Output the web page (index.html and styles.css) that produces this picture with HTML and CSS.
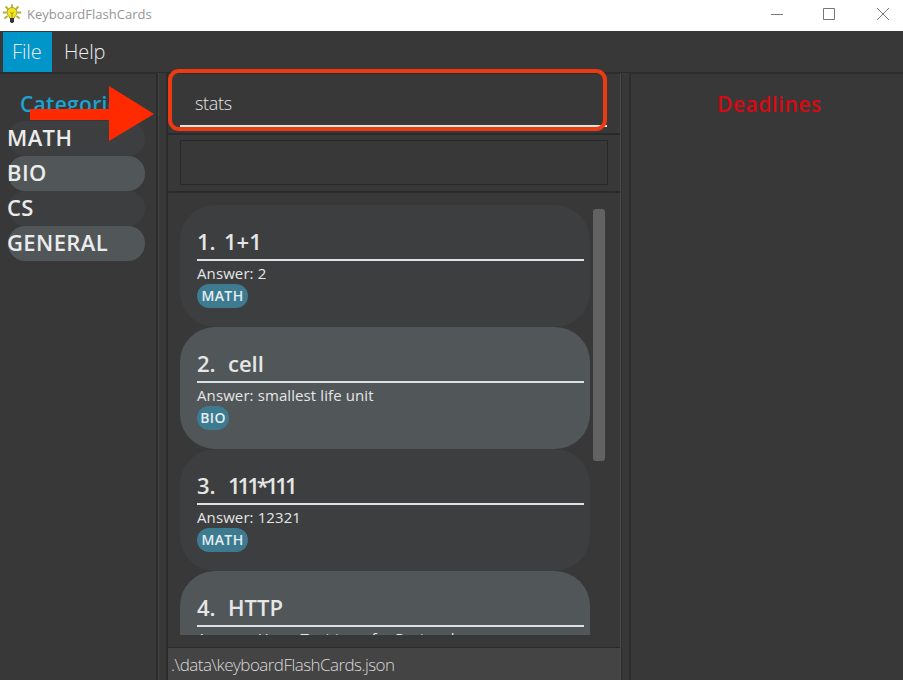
FILE: index.html
```html
<!DOCTYPE html>
<html lang="en">
<head>
<meta charset="utf-8">
<title>KeyboardFlashCards</title>
<link rel="stylesheet" href="styles.css">
</head>
<body>
<div class="window">
  <header class="titlebar">
    <svg class="logo" width="20" height="20" viewBox="0 0 20 20">
      <g stroke="#b5ae35" stroke-width="1.8" stroke-linecap="round"><path d="M10 1v2M4 3l2 2M16 3l-2 2M1.500 8.500h2.500M18.500 8.500h-2.500M3 14l2-1.500M17 14l-2-1.500"/></g>
      <path d="M10 3.500a5 5 0 0 0-5 5c0 3 2.500 3.500 3 6h4c.5-2.500 3-3 3-6a5 5 0 0 0-5-5z" fill="#f3e51b" stroke="#938d22" stroke-width=".8"/>
      <path d="M8.500 8l1.500 2 1.500-2M10 10v4" fill="none" stroke="#8d8417" stroke-width=".8"/>
      <path d="M8 14h4v3.500l-1 1.500H9L8 17.500z" fill="#34363c"/>
    </svg>
    <span class="app-name">KeyboardFlashCards</span>
    <svg class="controls" width="120" height="14" viewBox="0 0 120 14" fill="none" stroke="#777">
      <path d="M1 7.500h12M53.500 1.500h11v11h-11zM107 1l12 12M119 1l-12 12"/>
    </svg>
  </header>
  <nav class="menu"><span class="menu-item active">File</span><span class="menu-item">Help</span></nav>
  <main class="panes">
    <aside class="pane categories">
      <h2 class="cat-title">Categories</h2>
      <ul class="cat-list"><li>MATH</li><li>BIO</li><li>CS</li><li>GENERAL</li></ul>
    </aside>
    <section class="center">
      <div class="command"><div class="command-input">stats</div></div>
      <div class="result"><div class="result-box"></div></div>
      <div class="list-wrap">
        <div class="cards">
          <article class="card"><h3><span class="num first">1.</span><span>1+1</span></h3><p>Answer: 2</p><span class="tag">MATH</span></article>
          <article class="card"><h3><span class="num">2.</span><span>cell</span></h3><p>Answer: smallest life unit</p><span class="tag bio">BIO</span></article>
          <article class="card"><h3><span class="num">3.</span><span class="ones">111*111</span></h3><p>Answer: 12321</p><span class="tag">MATH</span></article>
          <article class="card"><h3><span class="num">4.</span><span>HTTP</span></h3><p>Answer: HyperText transfer Protocol</p></article>
        </div>
        <div class="scrollbar"></div>
      </div>
      <footer class="status">.\data\keyboardFlashCards.json</footer>
    </section>
    <aside class="pane deadlines"><h2 class="dead-title">Deadlines</h2></aside>
  </main>
  <div class="highlight"></div>
  <svg class="arrow" width="124" height="56" viewBox="0 0 124 56"><path d="M0 23h79V0l45 28-45 27V34H0z" fill="#ff2a00"/></svg>
</div>
</body>
</html>
```
FILE: styles.css
```css
* { box-sizing: border-box; }
body { margin: 0; font-family: "Open Sans", "Noto Sans", sans-serif; overflow: hidden; }
h2, h3, p, ul { margin: 0; padding: 0; }
.window { position: relative; width: 903px; height: 680px; background: #383838; display: flex; flex-direction: column; overflow: hidden; }
.titlebar { height: 31px; background: #fff; display: flex; align-items: center; padding: 0 13px 4px 2px; }
.logo { flex: none; }
.app-name { margin-left: 5px; font-size: 13px; color: #969696; letter-spacing: 0.03px; white-space: nowrap; }
.controls { margin-left: auto; }
.menu { height: 42px; display: flex; padding: 1px 3px; border-bottom: 1px solid #2c2c2c; }
.menu-item { height: 40px; line-height: 39px; padding: 0 12px; font-size: 20px; font-weight: 300; color: #ececec; letter-spacing: -0.1px; }
.menu-item.active { width: 49px; padding: 0 9px; background: #0096c9; }
.panes { flex: 1; min-height: 0; display: flex; gap: 9px; }
.pane { border-top: 1px solid #2e2e2e; }
.categories { width: 158px; border-right: 2px solid #2c2c2c; box-shadow: 1px 0 #444; padding: 15px 11px 0 8px; }
.cat-title, .dead-title { font-size: 21px; font-weight: 600; line-height: 30px; white-space: nowrap; }
.cat-title { color: #1ca3d2; padding-left: 12px; letter-spacing: 0.3px; }
.cat-list { list-style: none; margin-top: 2px; }
.cat-list li { height: 35px; line-height: 33px; border-radius: 17px; background: #3c3e3f; color: #ececec; font-size: 22px; font-weight: 600; text-indent: -1px; letter-spacing: 0.4px; }
.cat-list li:nth-child(even) { background: #515658; }
.center { width: 455px; margin-left: -1px; display: flex; flex-direction: column; border-left: 2px solid #2c2c2c; border-right: 1px solid #4b4b4b; box-shadow: 1px 0 #2c2c2c; }
.command { height: 62px; padding: 0 13px 6px 12px; border-top: 1px solid #2c2c2c; border-bottom: 2px solid #2a2a2a; }
.command-input { height: 53px; padding-left: 15px; line-height: 59px; border-bottom: 2px solid #e4e4e4; color: #e6e6e6; font-size: 18px; font-weight: 300; letter-spacing: -0.3px; }
.result { height: 58px; padding: 5px 12px 6px; border-bottom: 2px solid #2a2a2a; }
.result-box { height: 45px; border: 1px solid #292929; }
.list-wrap { flex: 1; min-height: 0; padding: 12px 14px 12px 12px; display: flex; gap: 3px; border-bottom: 1px solid #2a2a2a; }
.cards { width: 410px; flex: none; overflow: hidden; }
.card { height: 122px; padding: 19px 6px 0 17px; border-radius: 35px; background: #3c3e3f; color: #e6e6e6; }
.card:nth-child(even) { background: #515658; }
.card h3 { display: flex; height: 37px; line-height: 34px; border-bottom: 2px solid #dce2e4; font-size: 22px; font-weight: 600; }
.num { width: 31px; }
.num.first { width: 27px; }
.ones { letter-spacing: -3px; }
.card p { height: 23px; line-height: 24px; font-size: 15px; letter-spacing: 0.1px; }
.card:last-child p { line-height: 23px; }
.tag { display: block; width: 51px; height: 24px; line-height: 23px; border-radius: 12px; background: #3e7b91; color: #e3eef2; text-align: center; font-size: 14px; font-weight: 600; letter-spacing: 0.4px; }
.tag.bio { width: 32px; }
.scrollbar { width: 12px; height: 252px; margin-top: 4px; border-radius: 3px; background: #626262; }
.status { height: 32px; line-height: 34px; padding-left: 3px; background: #444; color: #d8d8d8; font-size: 17px; font-weight: 300; letter-spacing: -0.55px; white-space: nowrap; }
.deadlines { flex: 1; margin-left: -1px; border-left: 2px solid #2d2d2d; padding-top: 15px; }
.dead-title { color: #d60a12; padding-left: 86px; letter-spacing: 0.5px; }
.highlight { position: absolute; left: 168px; top: 69px; width: 439px; height: 62px; border: 4px solid #ec3b12; border-radius: 11px; }
.arrow { position: absolute; left: 30px; top: 86px; }
```
